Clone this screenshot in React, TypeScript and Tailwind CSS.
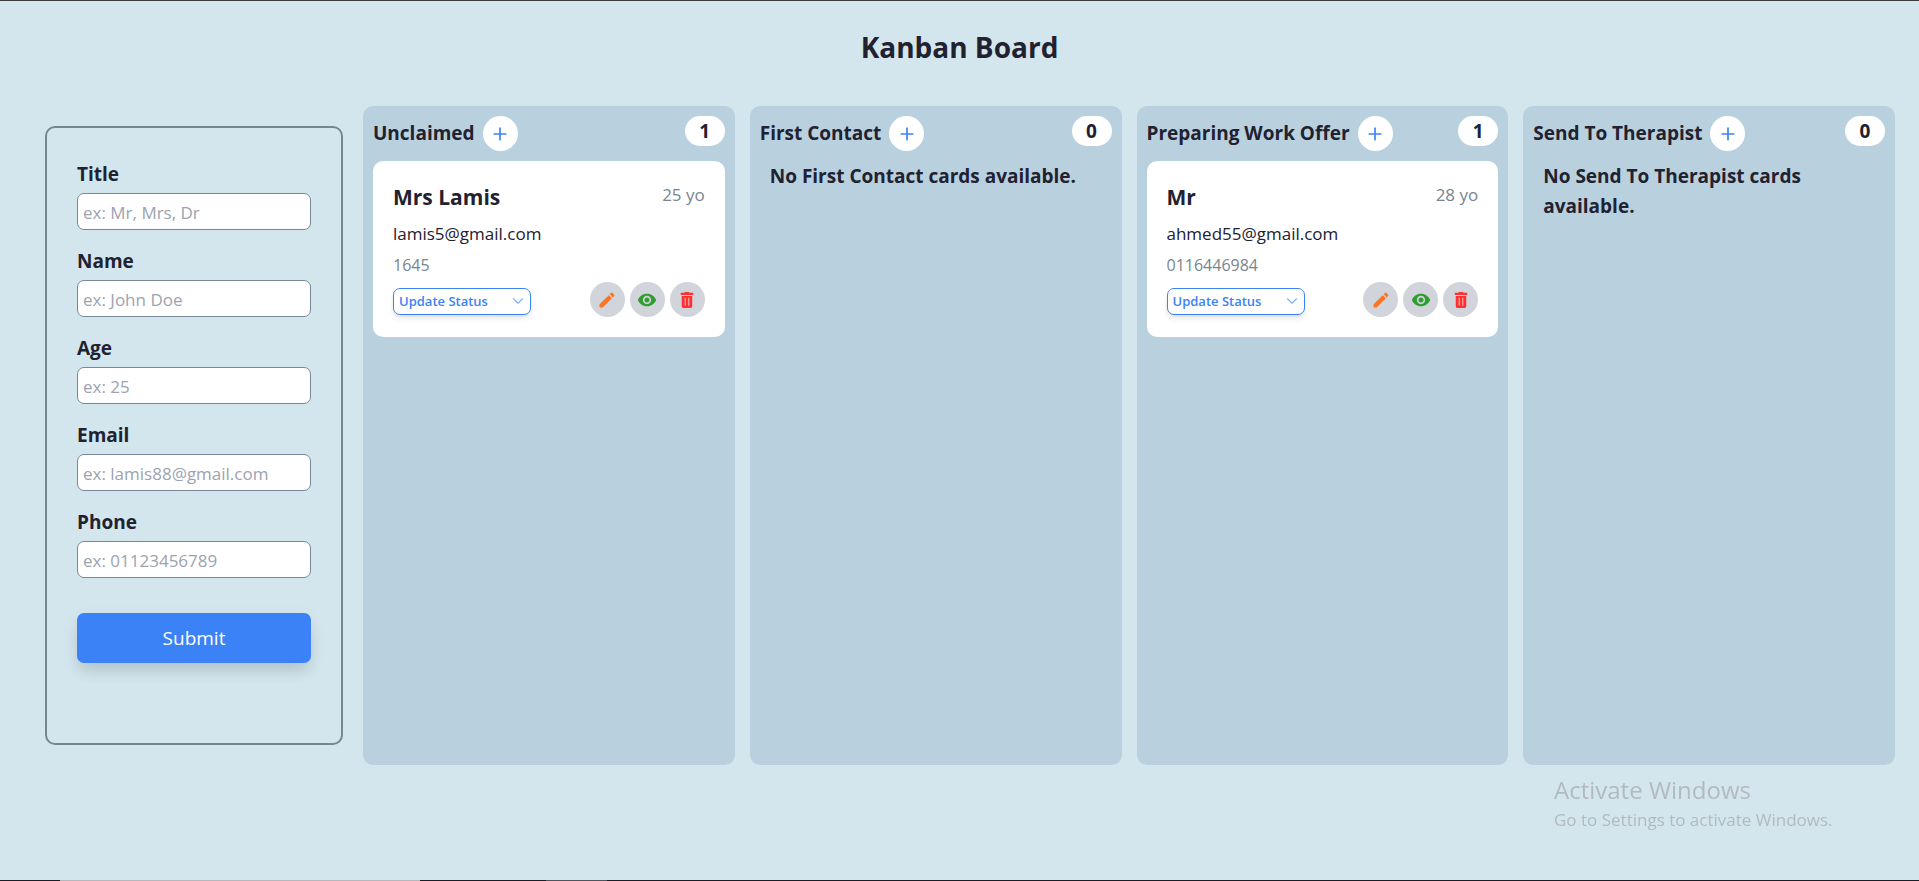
import React from "react";
import { FiChevronDown, FiPlus } from "react-icons/fi";
import { MdRemoveRedEye } from "react-icons/md";

type Person = { name: string; age: number; email: string; phone: string };
type ColumnData = { title: string; cards: Person[] };

const fields = [
  { id: "title", label: "Title", placeholder: "ex: Mr, Mrs, Dr", type: "text" },
  { id: "name", label: "Name", placeholder: "ex: John Doe", type: "text" },
  { id: "age", label: "Age", placeholder: "ex: 25", type: "text" },
  { id: "email", label: "Email", placeholder: "ex: lamis88@gmail.com", type: "email" },
  { id: "phone", label: "Phone", placeholder: "ex: 01123456789", type: "tel" },
];

const columns: ColumnData[] = [
  { title: "Unclaimed", cards: [{ name: "Mrs Lamis", age: 25, email: "lamis5@gmail.com", phone: "1645" }] },
  { title: "First Contact", cards: [] },
  { title: "Preparing Work Offer", cards: [{ name: "Mr", age: 28, email: "ahmed55@gmail.com", phone: "0116446984" }] },
  { title: "Send To Therapist", cards: [] },
];

const iconButton = "flex size-[35px] items-center justify-center rounded-full bg-[#d1d5db] text-xl";

function PencilIcon() {
  return (
    <svg viewBox="0 0 24 24" className="size-5" fill="#ff7420" aria-hidden="true">
      <path d="M3 17.46v3.04c0 .28.22.5.5.5h3.04c.13 0 .26-.05.35-.15L17.81 9.94l-3.75-3.75L3.15 17.1c-.1.1-.15.22-.15.36zM20.71 7.04a1 1 0 0 0 0-1.41l-2.34-2.34a1 1 0 0 0-1.41 0l-1.83 1.83 3.75 3.75 1.83-1.83z" />
    </svg>
  );
}

function TrashIcon() {
  return (
    <svg viewBox="0 0 24 24" className="size-5" aria-hidden="true">
      <path
        fill="#ff3030"
        d="M9 3.2a1 1 0 0 1 .9-.7h4.2a1 1 0 0 1 .9.7h3.8a.7.7 0 0 1 .7.7v1.4a.7.7 0 0 1-.7.7H5.2a.7.7 0 0 1-.7-.7V3.9a.7.7 0 0 1 .7-.7zM5.7 7.2h12.6v12.3a2 2 0 0 1-2 2H7.7a2 2 0 0 1-2-2z"
      />
      <path stroke="#f3a5ab" strokeWidth="1.5" d="M9.9 9.2v9.6M14.1 9.2v9.6" />
    </svg>
  );
}

function PersonForm() {
  return (
    <form
      className="mt-5 flex w-[298px] shrink-0 flex-col rounded-[10px] border-2 border-[#778590] px-[30px] pt-8 pb-20"
      onSubmit={(e) => e.preventDefault()}
    >
      <div className="flex flex-col gap-[17px]">
        {fields.map((f) => (
          <div key={f.id} className="flex flex-col gap-[5px]">
            <label htmlFor={f.id} className="text-[19px] leading-7 font-bold">
              {f.label}
            </label>
            <input
              id={f.id}
              type={f.type}
              placeholder={f.placeholder}
              className="h-[37px] rounded-[7px] border border-[#778899] bg-white px-[5px] pt-px text-[17px] placeholder:text-[#9ca3af]"
            />
          </div>
        ))}
      </div>
      <button
        type="submit"
        className="mt-[35px] h-[50px] rounded-[7px] bg-[#3b82f6] text-[19px] text-white shadow-[0_10px_15px_-3px_rgb(0_0_0/0.12),0_6px_20px_rgb(0_0_0/0.05)]"
      >
        Submit
      </button>
    </form>
  );
}

function PersonCard({ person }: { person: Person }) {
  return (
    <article className="rounded-[10px] bg-white p-5">
      <div className="flex items-start justify-between">
        <h3 className="text-[21px] leading-[33px] font-bold">{person.name}</h3>
        <span className="text-[17px] leading-7 font-medium text-[#778590]">{`${person.age} yo`}</span>
      </div>
      <p className="mt-[6px] text-[17px] leading-7 font-medium">{person.email}</p>
      <p className="mt-[3px] text-base leading-7 font-medium text-[#778590]">{person.phone}</p>
      <div className="mt-[3px] flex items-end justify-between">
        <div className="relative mb-[2px]">
          <select
            aria-label="Update Status"
            className="block h-[27px] w-[138px] appearance-none rounded-[7px] border border-[#3b82f6] bg-white px-[5px] text-[13px] font-semibold text-[#3b82f6] shadow-md"
          >
            <option>Update Status</option>
          </select>
          <FiChevronDown className="pointer-events-none absolute top-1 right-1 size-[18px] stroke-[1.5] text-[#7fb0fa]" />
        </div>
        <div className="flex gap-[5px]">
          <button type="button" aria-label="Edit" className={iconButton}>
            <PencilIcon />
          </button>
          <button type="button" aria-label="View" className={iconButton}>
            <MdRemoveRedEye className="text-[#2f9e2f]" />
          </button>
          <button type="button" aria-label="Delete" className={iconButton}>
            <TrashIcon />
          </button>
        </div>
      </div>
    </article>
  );
}

function Column({ column }: { column: ColumnData }) {
  return (
    <section className="min-h-[659px] min-w-0 flex-1 rounded-[10px] bg-[#b9d0df] p-[10px]">
      <header className="flex items-start justify-between">
        <div className="flex items-center gap-2">
          <h2 className="text-[19px] font-bold">{column.title}</h2>
          <button
            type="button"
            aria-label={"Add " + column.title + " card"}
            className="flex size-[35px] items-center justify-center rounded-full bg-white text-xl text-[#3b82f6]"
          >
            <FiPlus />
          </button>
        </div>
        <span className="flex h-[30px] w-10 items-center justify-center rounded-full bg-white text-[19px] font-bold">
          {column.cards.length}
        </span>
      </header>
      <div className="mt-[10px] flex flex-col gap-[10px]">
        {column.cards.length === 0 && (
          <p className="px-[10px] text-[19px] leading-[30px] font-bold">{`No ${column.title} cards available.`}</p>
        )}
        {column.cards.map((p) => (
          <PersonCard key={p.email} person={p} />
        ))}
      </div>
    </section>
  );
}

export default function App() {
  return (
    <div className="flex min-h-screen flex-col border-t border-[#3a3a40] bg-[#d3e6ed] font-['Open_Sans','Noto_Sans',sans-serif] text-[#212130]">
      <h1 className="mt-[26px] text-center text-[28px] leading-10 font-bold">Kanban Board</h1>
      <main className="mt-[39px] flex items-start gap-5 pr-6 pl-[45px]">
        <PersonForm />
        <div className="flex min-w-0 flex-1 gap-[15px]">
          {columns.map((c) => (
            <Column key={c.title} column={c} />
          ))}
        </div>
      </main>
      <aside className="pointer-events-none fixed right-[78px] bottom-[47px] w-[287px] text-[#b3babf]">
        <p className="text-2xl leading-8">Activate Windows</p>
        <p className="text-[17px] leading-7 whitespace-nowrap">Go to Settings to activate Windows.</p>
      </aside>
      <div className="mt-auto flex h-px bg-[#1c1c24]">
        <span className="ml-[60px] w-[360px] bg-[#b8b8bc]" />
        <span className="ml-[126px] w-[61px] bg-[#50555c]" />
      </div>
    </div>
  );
}
